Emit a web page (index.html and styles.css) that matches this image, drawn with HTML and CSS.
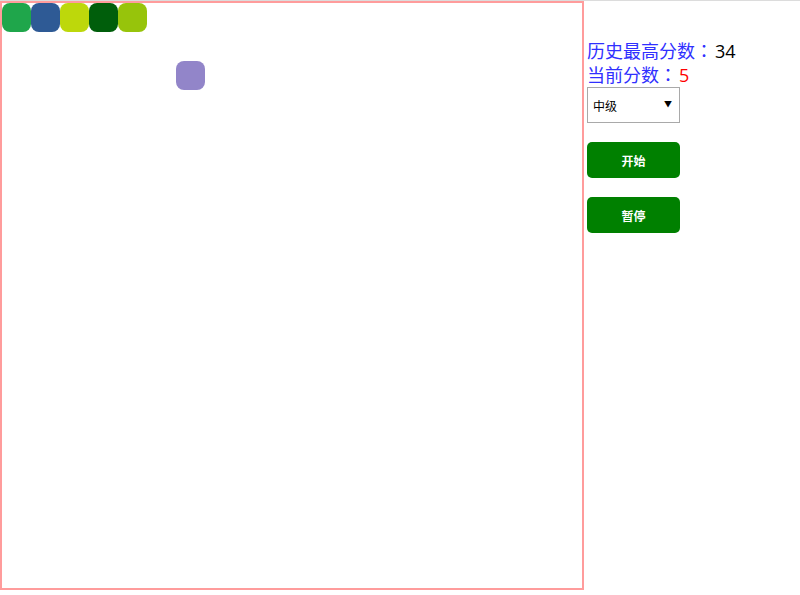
FILE: index.html
```html
<!DOCTYPE html>
<html lang="zh-CN">
<head>
<meta charset="utf-8">
<title>贪吃蛇</title>
<link rel="stylesheet" href="styles.css">
</head>
<body>
<div class="page">
  <div class="board">
    <div class="cell c1" style="left:0px;top:0px"></div>
    <div class="cell c2" style="left:29px;top:0px"></div>
    <div class="cell c3" style="left:58px;top:0px"></div>
    <div class="cell c4" style="left:87px;top:0px"></div>
    <div class="cell c5" style="left:116px;top:0px"></div>
    <div class="cell food" style="left:174px;top:58px"></div>
  </div>
  <div class="panel">
    <div class="score">历史最高分数<span class="colon">：</span><span class="num">34</span></div>
    <div class="score">当前分数<span class="colon">：</span><span class="num cur">5</span></div>
    <div class="select-wrap">
      <select class="level">
        <option>初级</option>
        <option selected>中级</option>
        <option>高级</option>
      </select>
      <span class="arrow">▼</span>
    </div>
    <button class="btn">开始</button>
    <button class="btn">暂停</button>
  </div>
</div>
</body>
</html>
```
FILE: styles.css
```css
html, body {
  margin: 0;
  padding: 0;
  background: #fff;
}
body {
  border-top: 1px solid #dcdcdc;
  font-family: "Noto Sans CJK SC", "Noto Sans", sans-serif;
}
.page {
  display: flex;
  align-items: flex-start;
}
.board {
  position: relative;
  width: 580px;
  height: 585px;
  border: 2px solid #ff9c9c;
  flex: none;
}
.cell {
  position: absolute;
  width: 29px;
  height: 29px;
  border-radius: 8px;
}
.c1 { background: #1fa64b; }
.c2 { background: #2e5a95; }
.c3 { background: #bdd80b; }
.c4 { background: #005e0b; }
.c5 { background: #97c40b; }
.food { background: #9285c9; }
.panel {
  margin-left: 3px;
  padding-top: 37px;
  display: flex;
  flex-direction: column;
  align-items: flex-start;
}
.score {
  display: flex;
  align-items: baseline;
  font-size: 18px;
  line-height: 24px;
  height: 24px;
  color: #3030ff;
  white-space: nowrap;
}
.colon {
  font-family: "Noto Sans CJK TC", sans-serif;
  text-spacing-trim: space-all;
  padding: 0 2px 0 0;
}
.num {
  color: #000;
  font-family: "Open Sans", "Noto Sans", sans-serif;
}
.num.cur { color: #ff0000; }
.select-wrap {
  position: relative;
  margin-top: 1px;
}
.level {
  appearance: none;
  -webkit-appearance: none;
  display: block;
  width: 93px;
  height: 36px;
  border: 1px solid #a9a9a9;
  border-radius: 0;
  background: #fff;
  font-family: "Noto Sans CJK SC", sans-serif;
  font-size: 12px;
  color: #000;
  padding: 0 0 0 5px;
  margin: 0;
}
.arrow {
  position: absolute;
  right: 8px;
  top: 11px;
  font-size: 8px;
  color: #000;
  pointer-events: none;
}
.btn {
  width: 93px;
  height: 36px;
  margin-top: 19px;
  border: none;
  border-radius: 5px;
  background: #008000;
  color: #fff;
  font-family: "Noto Sans CJK SC", sans-serif;
  font-size: 12px;
  font-weight: bold;
  padding: 0;
}
```
